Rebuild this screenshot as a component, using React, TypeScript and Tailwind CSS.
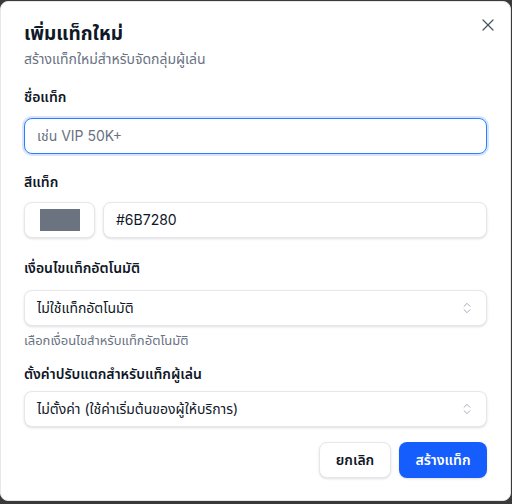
import { X, ChevronsUpDown } from 'lucide-react'

function Label({ text, className }: { text: string; className: string }) {
  return <div className={`h-5 text-sm font-semibold leading-5 text-gray-900 ${className}`}>{text}</div>
}

function SelectBox({ value, className }: { value: string; className: string }) {
  return (
    <div
      className={`flex h-9 items-center justify-between rounded-lg border border-gray-200 bg-white px-3 text-sm text-gray-900 shadow-sm ${className}`}
    >
      <span>{value}</span>
      <ChevronsUpDown className="h-3.5 w-3.5 text-gray-400" strokeWidth={1.5} />
    </div>
  )
}

export default function App() {
  return (
    <div
      className="h-[504px] w-[512px] overflow-hidden bg-[#3a3a3a] pt-px"
      style={{ fontFamily: "Inter, 'Noto Sans Thai', 'Noto Sans', sans-serif" }}
    >
      <div className="relative h-[500px] w-[511px] rounded-lg border border-gray-200 bg-white px-[23px] pt-[23px]">
        <button className="absolute right-[12px] top-[13px] text-gray-600">
          <X className="h-5 w-5" strokeWidth={1.5} />
        </button>

        <h2 className="h-[18px] text-[19px] font-bold leading-[18px] text-gray-900">เพิ่มแท็กใหม่</h2>
        <p className="mt-1.5 text-sm leading-5 text-gray-500">สร้างแท็กใหม่สำหรับจัดกลุ่มผู้เล่น</p>

        <Label text="ชื่อแท็ก" className="mt-[18px]" />
        <div className="mt-[11px] flex h-9 items-center rounded-lg border border-blue-500 bg-white px-3 text-sm text-gray-500 ring-2 ring-blue-500/20">
          เช่น VIP 50K+
        </div>

        <Label text="สีแท็ก" className="mt-[18px]" />
        <div className="mt-2.5 flex gap-2">
          <div className="flex h-9 w-[71px] items-center justify-center rounded-lg border border-gray-200 bg-white shadow-sm">
            <div className="h-[22px] w-10 bg-[#6B7280]" />
          </div>
          <div className="flex h-9 flex-1 items-center rounded-lg border border-gray-200 bg-white px-3 text-sm text-gray-900 shadow-sm">
            #6B7280
          </div>
        </div>

        <Label text="เงื่อนไขแท็กอัตโนมัติ" className="mt-5" />
        <SelectBox value="ไม่ใช้แท็กอัตโนมัติ" className="mt-3" />
        <p className="mt-1 text-[13px] leading-5 text-gray-500">เลือกเงื่อนไขสำหรับแท็กอัตโนมัติ</p>

        <Label text="ตั้งค่าปรับแตกสำหรับแท็กผู้เล่น" className="mt-[14px]" />
        <SelectBox value="ไม่ตั้งค่า (ใช้ค่าเริ่มต้นของผู้ให้บริการ)" className="mt-[7px]" />

        <div className="mt-[15px] flex justify-end gap-2">
          <button className="h-9 w-[72px] rounded-lg border border-gray-200 bg-white text-sm font-semibold text-gray-900 shadow-sm">
            ยกเลิก
          </button>
          <button className="h-9 w-[88px] rounded-lg bg-blue-600 text-sm font-semibold text-white shadow-sm">
            สร้างแท็ก
          </button>
        </div>
      </div>
    </div>
  )
}
